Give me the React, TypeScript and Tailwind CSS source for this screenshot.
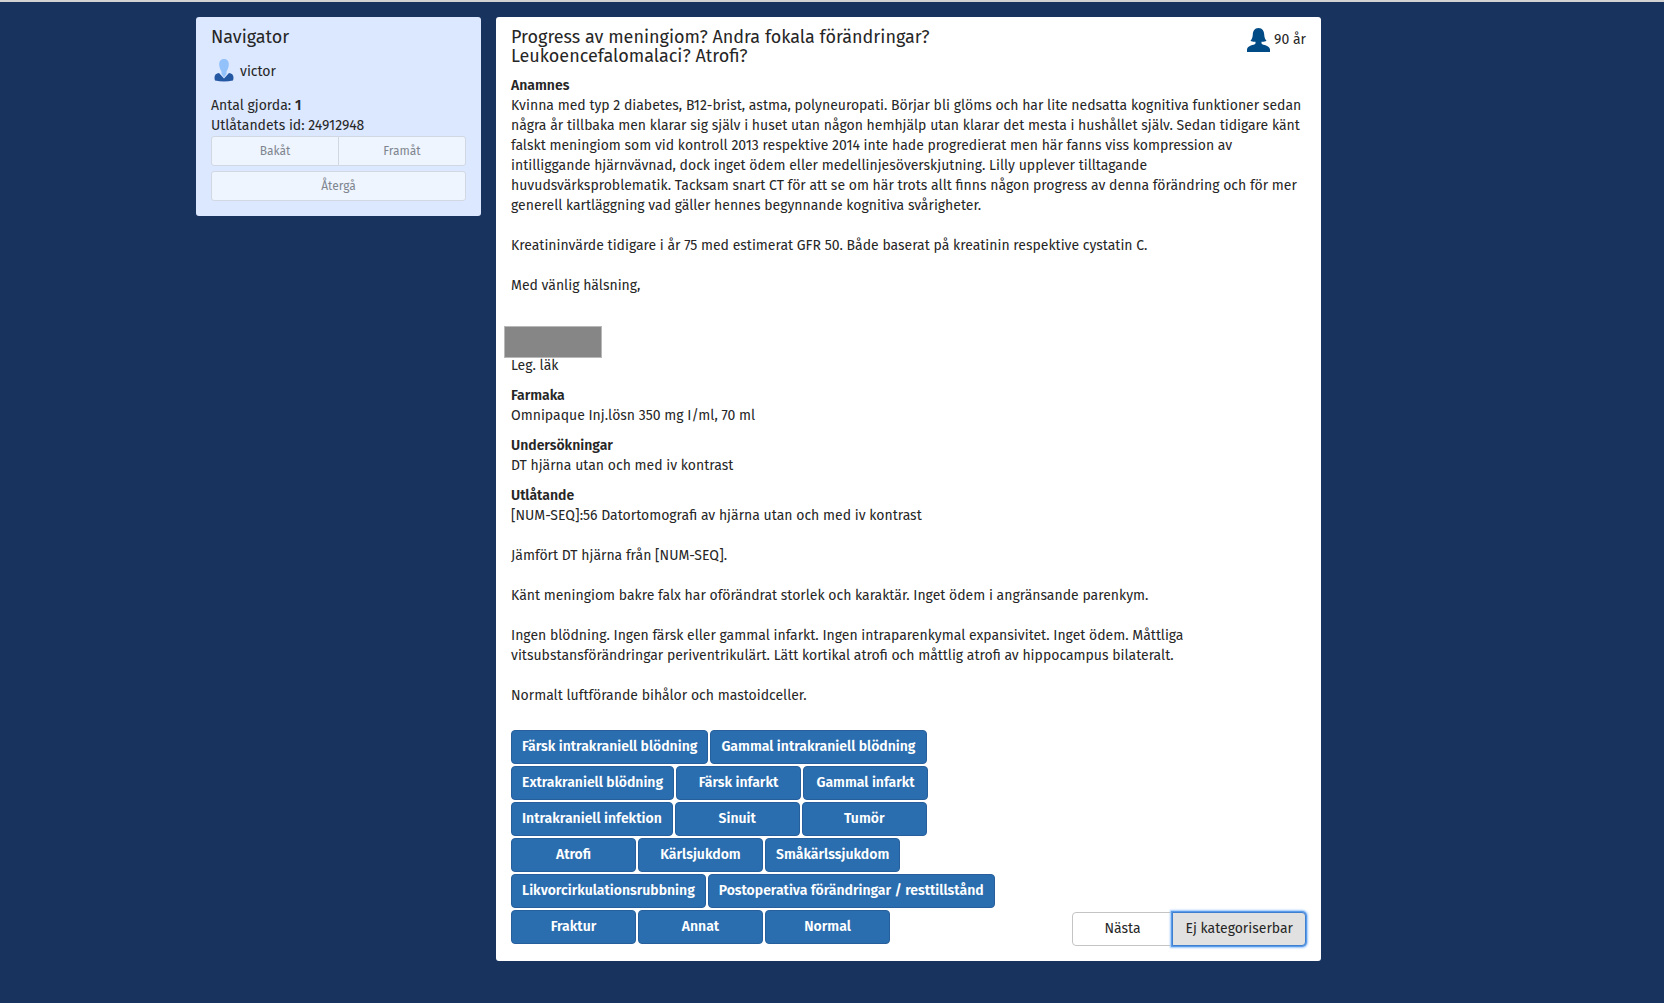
import React from "react";

const focus = "focus-visible:outline-2 focus-visible:outline-[#66a3f2]";

const categoryRows = [
  ["Färsk intrakraniell blödning", "Gammal intrakraniell blödning"],
  ["Extrakraniell blödning", "Färsk infarkt", "Gammal infarkt"],
  ["Intrakraniell infektion", "Sinuit", "Tumör"],
  ["Atrofi", "Kärlsjukdom", "Småkärlssjukdom"],
  ["Likvorcirkulationsrubbning", "Postoperativa förändringar / resttillstånd"],
  ["Fraktur", "Annat", "Normal"],
];

const anamnes = `Kvinna med typ 2 diabetes, B12-brist, astma, polyneuropati. Börjar bli glöms och har lite nedsatta kognitiva funktioner sedan
några år tillbaka men klarar sig själv i huset utan någon hemhjälp utan klarar det mesta i hushållet själv. Sedan tidigare känt
falskt meningiom som vid kontroll 2013 respektive 2014 inte hade progredierat men här fanns viss kompression av
intilliggande hjärnvävnad, dock inget ödem eller medellinjesöverskjutning. Lilly upplever tilltagande
huvudsvärksproblematik. Tacksam snart CT för att se om här trots allt finns någon progress av denna förändring och för mer
generell kartläggning vad gäller hennes begynnande kognitiva svårigheter.

Kreatininvärde tidigare i år 75 med estimerat GFR 50. Både baserat på kreatinin respektive cystatin C.

Med vänlig hälsning,`;

const utlatande = `[NUM-SEQ]:56 Datortomografi av hjärna utan och med iv kontrast

Jämfört DT hjärna från [NUM-SEQ].

Känt meningiom bakre falx har oförändrat storlek och karaktär. Inget ödem i angränsande parenkym.

Ingen blödning. Ingen färsk eller gammal infarkt. Ingen intraparenkymal expansivitet. Inget ödem. Måttliga
vitsubstansförändringar periventrikulärt. Lätt kortikal atrofi och måttlig atrofi av hippocampus bilateralt.

Normalt luftförande bihålor och mastoidceller.`;

function UserIcon() {
  return (
    <svg viewBox="0 0 20 23" className="h-[23px] w-5" aria-hidden="true">
      <path d="M1 21.500C-.5 16.500 1.500 14.500 5 14L10 19.500L15 14C18.500 14.500 20.500 16.500 19 21.500Q10 23.500 1 21.500Z" fill="#2458a3" />
      <path d="M10 0C13.500 0 15 2.500 14.800 6C14.500 9 13.500 11 12.500 12.500V15L10 18.500L7.500 15V12.500C6.500 11 5.500 9 5.200 6C5 2.500 6.500 0 10 0Z" fill="#93c1fa" />
    </svg>
  );
}

function FemaleIcon() {
  return (
    <svg viewBox="0 0 23 24" className="h-6 w-[23px]" aria-hidden="true">
      <path
        d="M11.500 0C15.500 0 17 3 17.200 6.500C17.300 9 18 11 19.500 12.800C18 13.800 16 14 14.500 13.800V15.500C16 17.500 22.500 17 23 21.500V24H0V21.500C.5 17 7 17.500 8.500 15.500V13.800C7 14 5 13.800 3.500 12.800C5 11 5.700 9 5.800 6.500C6 3 7.500 0 11.500 0Z"
        fill="#004a86"
      />
    </svg>
  );
}

function Section({ title, children }: { title: string; children: React.ReactNode }) {
  return (
    <section className="mt-2.5">
      <h3 className="font-semibold">{title}</h3>
      {children}
    </section>
  );
}

function Navigator() {
  const button =
    "h-[30px] border border-[#d2d8e2] bg-[#eef5ff] px-2.5 text-xs text-[#7f858e]";
  return (
    <aside className="self-start rounded-[3px] bg-[#dce8ff] px-[15px] pt-[11px] pb-[15px]">
      <h2 className="text-lg leading-[19px]">Navigator</h2>
      <div className="mt-2.5 flex items-end gap-1.5 pt-0.5 pl-[3px]">
        <UserIcon />
        <span>victor</span>
      </div>
      <p className="mt-3.5">
        Antal gjorda: <b className="font-semibold">1</b>
      </p>
      <p>Utlåtandets id: 24912948</p>
      <div className="flex">
        <button disabled className={`${button} flex-1 rounded-l-[3px]`}>
          Bakåt
        </button>
        <button disabled className={`${button} -ml-px flex-1 rounded-r-[3px]`}>
          Framåt
        </button>
      </div>
      <button disabled className={`${button} mt-[5px] w-full rounded-[3px]`}>
        Återgå
      </button>
    </aside>
  );
}

export default function App() {
  return (
    <div className="min-h-screen border-t-2 border-[#d3d3d3] bg-[#19335f] px-4 py-[15px] font-['Fira_Sans','Noto_Sans',sans-serif] text-sm leading-5 text-[#262626]">
      <div className="mx-auto grid max-w-[1272px] grid-cols-[95fr_275fr_44fr] gap-[15px]">
        <Navigator />
        <main className="rounded-[3px] bg-white px-[15px] pt-[11px] pb-[17px]">
          <header className="flex items-start justify-between gap-4">
            <h1 className="text-lg leading-[19px]">
              Progress av meningiom? Andra fokala förändringar?
              <br />
              Leukoencefalomalaci? Atrofi?
            </h1>
            <div className="flex shrink-0 items-center gap-1">
              <FemaleIcon />
              <span>90 år</span>
            </div>
          </header>

          <Section title="Anamnes">
            <p className="whitespace-pre-line">{anamnes}</p>
            <div className="mt-[30px] -ml-[7px] h-8 w-[98px] border border-[#b8b8b8] bg-[#868686]" />
            <p className="-mt-0.5">Leg. läk</p>
          </Section>
          <Section title="Farmaka">
            <p>Omnipaque Inj.lösn 350 mg I/ml, 70 ml</p>
          </Section>
          <Section title="Undersökningar">
            <p>DT hjärna utan och med iv kontrast</p>
          </Section>
          <Section title="Utlåtande">
            <p className="whitespace-pre-line">{utlatande}</p>
          </Section>

          <footer className="mt-6 flex items-end justify-between gap-4">
            <div className="flex flex-col gap-0.5">
              {categoryRows.map((row) => (
                <div key={row[0]} className="flex gap-0.5">
                  {row.map((label) => (
                    <button
                      key={label}
                      className={`h-[34px] min-w-[125px] rounded border border-[#265f9b] bg-[#2a6eaf] px-2.5 font-semibold whitespace-nowrap text-white ${focus}`}
                    >
                      {label}
                    </button>
                  ))}
                </div>
              ))}
            </div>
            <div className="-mb-0.5 flex shrink-0">
              <button className={`h-[34px] w-[100px] rounded-l border border-[#c4c4c4] bg-white ${focus}`}>
                Nästa
              </button>
              <button className="h-[34px] rounded-r border border-[#3f7fd0] bg-[#e1e1e1] px-3 shadow-[0_0_0_1px_#5a9bea,0_0_2px_2px_#9cc6fa]">
                Ej kategoriserbar
              </button>
            </div>
          </footer>
        </main>
      </div>
    </div>
  );
}
